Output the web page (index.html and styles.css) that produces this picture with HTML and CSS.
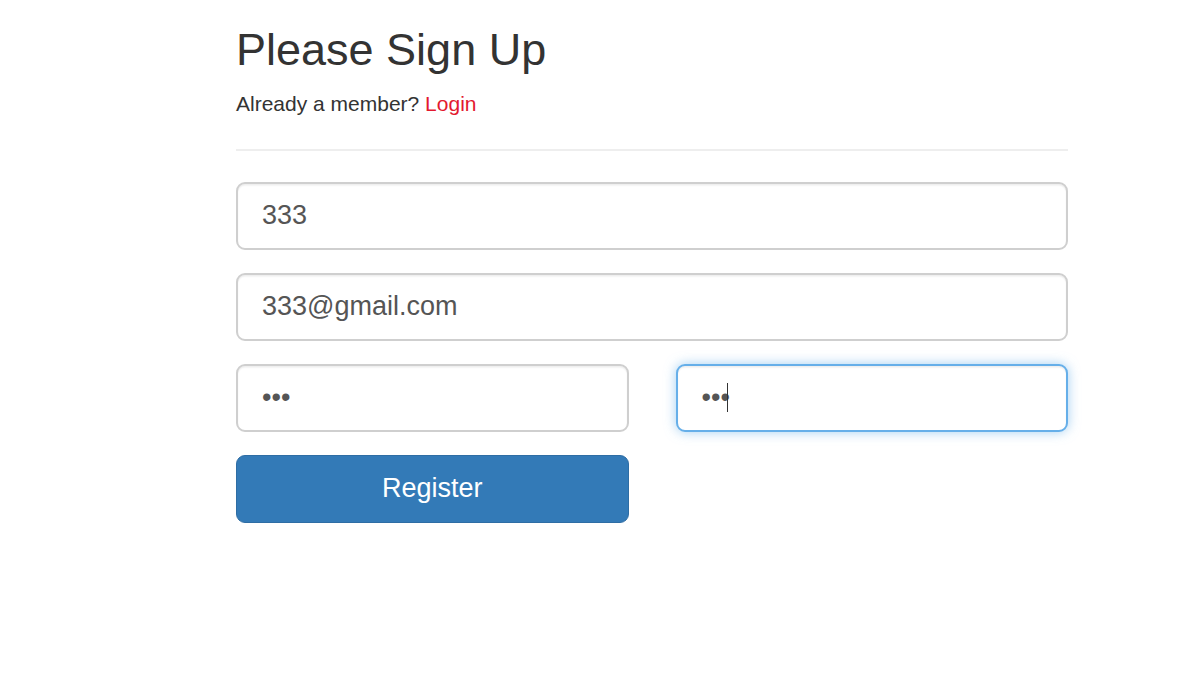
FILE: index.html
```html
<!DOCTYPE html>
<html lang="en">
<head>
<meta charset="utf-8">
<title>Please Sign Up</title>
<link rel="stylesheet" href="styles.css">
</head>
<body>
<main class="signup">
  <h1 class="title">Please Sign Up</h1>
  <p class="sub">Already a member? <a class="login" href="#">Login</a></p>
  <hr class="divider">
  <form class="form">
    <input class="field" type="text" value="333">
    <input class="field" type="email" value="333@gmail.com">
    <div class="pair">
      <input class="field" type="password" value="333">
      <span class="caret-wrap"><input class="field focus" type="password" value="333"></span>
    </div>
    <div class="pair">
      <button class="btn" type="button">Register</button>
    </div>
  </form>
</main>
</body>
</html>
```

FILE: styles.css
```css
html, body {
  margin: 0;
  padding: 0;
  background: #fff;
}
body {
  font-family: "Liberation Sans", Arial, sans-serif;
  color: #333;
}
.signup {
  width: 832px;
  margin-left: 236px;
  display: flex;
  flex-direction: column;
}
.title {
  margin: 25px 0 0;
  font-size: 45px;
  font-weight: 400;
  line-height: 49.5px;
  color: #333;
}
.sub {
  margin: 14px 0 0;
  font-size: 21px;
  line-height: 30px;
}
.login {
  color: #e3192f;
  text-decoration: none;
}
.divider {
  margin: 30px 0 0;
  border: 0;
  border-top: 2px solid #eee;
  height: 0;
}
.form {
  margin-top: 31.5px;
  display: flex;
  flex-direction: column;
  gap: 23.5px;
}
.field {
  box-sizing: border-box;
  display: block;
  width: 100%;
  height: 67.5px;
  margin: 0;
  padding: 0 24px;
  font-family: "Liberation Sans", Arial, sans-serif;
  font-size: 27px;
  color: #555;
  background: #fff;
  border: 2px solid #cfcfcf;
  border-radius: 9px;
  box-shadow: inset 0 1.5px 1.5px rgba(0, 0, 0, 0.075);
  outline: none;
}
.field.focus {
  border-color: #66afe9;
  box-shadow: inset 0 1.5px 1.5px rgba(0, 0, 0, 0.075), 0 0 12px rgba(102, 175, 233, 0.6);
}
.caret-wrap {
  position: relative;
  display: block;
}
.caret-wrap::after {
  content: "";
  position: absolute;
  left: 51px;
  top: 19px;
  width: 1px;
  height: 29px;
  background: #333;
}
.pair {
  display: grid;
  grid-template-columns: 1fr 1fr;
  gap: 47px;
}
.btn {
  box-sizing: border-box;
  height: 67.5px;
  margin: 0;
  padding: 0;
  font-family: "Liberation Sans", Arial, sans-serif;
  font-size: 27px;
  color: #fff;
  background: #337ab7;
  border: 1.5px solid #2e6da4;
  border-radius: 9px;
  cursor: pointer;
}
```
